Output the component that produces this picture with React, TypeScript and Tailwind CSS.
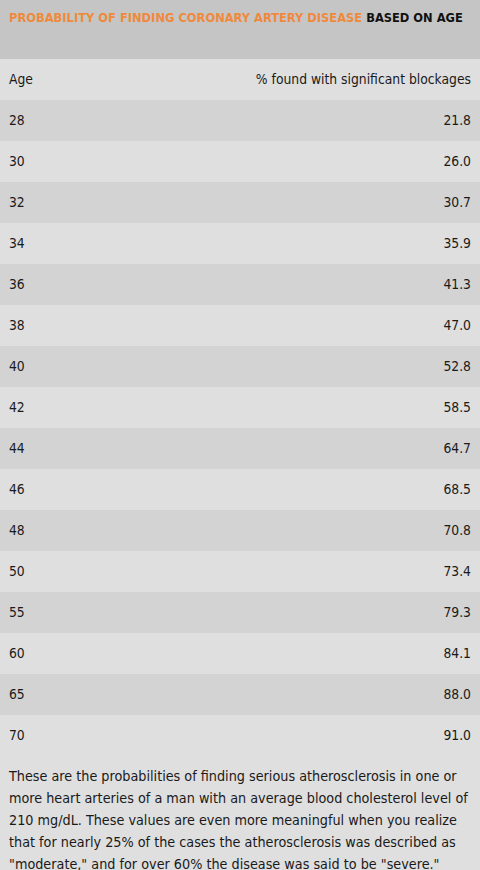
const rows: [string, string][] = [
  ['28', '21.8'],
  ['30', '26.0'],
  ['32', '30.7'],
  ['34', '35.9'],
  ['36', '41.3'],
  ['38', '47.0'],
  ['40', '52.8'],
  ['42', '58.5'],
  ['44', '64.7'],
  ['46', '68.5'],
  ['48', '70.8'],
  ['50', '73.4'],
  ['55', '79.3'],
  ['60', '84.1'],
  ['65', '88.0'],
  ['70', '91.0'],
];

export default function App() {
  return (
    <div className="h-[870px] w-[480px] overflow-hidden bg-[#dfdfdf] font-['DejaVu_Sans_Condensed','DejaVu_Sans',sans-serif] text-[#1a1a1a]">
      <div className="h-[59px] bg-[#c5c5c5] px-[9px] pt-[9px] text-[12.75px] font-bold leading-[17px]">
        <span className="text-[#ef8a3c]">PROBABILITY OF FINDING CORONARY ARTERY DISEASE</span>{' '}
        <span className="text-[#111]">BASED ON AGE</span>
      </div>

      <div className="flex h-[41px] items-center justify-between bg-[#dfdfdf] px-[9px] text-[13.75px]">
        <span>Age</span>
        <span>% found with significant blockages</span>
      </div>

      {rows.map(([age, pct], i) => (
        <div
          key={age}
          className={`flex h-[41px] items-center justify-between px-[9px] text-[13.75px] ${
            i % 2 === 0 ? 'bg-[#d3d3d3]' : 'bg-[#dfdfdf]'
          }`}
        >
          <span>{age}</span>
          <span>{pct}</span>
        </div>
      ))}

      <p className="px-[9px] pt-[9px] text-[14.25px] leading-[22px]">
        These are the probabilities of finding serious atherosclerosis in one or more heart arteries
        of a man with an average blood cholesterol level of 210 mg/dL. These values are even more
        meaningful when you realize that for nearly 25% of the cases the atherosclerosis was
        described as "moderate," and for over 60% the disease was said to be "severe."
      </p>
    </div>
  );
}
